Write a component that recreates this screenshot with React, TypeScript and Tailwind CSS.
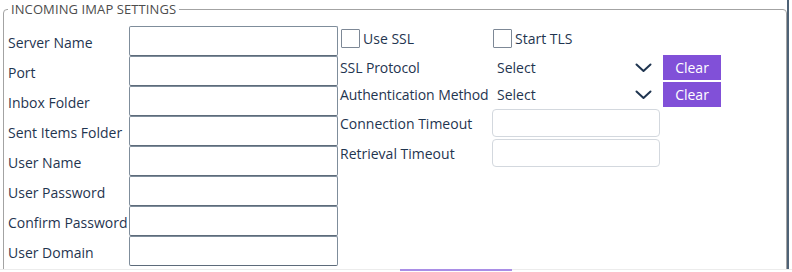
import { FC } from 'react'

const leftFields = [
  'Server Name',
  'Port',
  'Inbox Folder',
  'Sent Items Folder',
  'User Name',
  'User Password',
  'Confirm Password',
  'User Domain',
]

const Chevron: FC = () => (
  <svg width="17" height="10" viewBox="0 0 17 10" fill="none">
    <path d="M1.5 1.5 L8.5 8 L15.5 1.5" stroke="#1f3550" strokeWidth="2" strokeLinecap="round" strokeLinejoin="round" />
  </svg>
)

const Checkbox: FC<{ label: string }> = ({ label }) => (
  <label className="flex items-center gap-[3px]">
    <span className="w-[19px] h-[19px] border border-[#7d8896] rounded-[1px] bg-white" />
    <span>{label}</span>
  </label>
)

const SelectRow: FC<{ label: string }> = ({ label }) => (
  <div className="flex items-center h-[27px]">
    <span className="w-[152px] shrink-0 whitespace-nowrap tracking-[-0.1px]">{label}</span>
    <div className="flex items-center w-[167px] pl-[5px] pr-[7px] justify-between">
      <span>Select</span>
      <Chevron />
    </div>
    <button className="ml-[4px] w-[58px] h-[25px] bg-[#8150d8] text-white text-[14px] leading-none">
      Clear
    </button>
  </div>
)

const TimeoutRow: FC<{ label: string }> = ({ label }) => (
  <div className="flex items-center h-[30px]">
    <span className="w-[152px] shrink-0 whitespace-nowrap">{label}</span>
    <input className="w-[168px] h-[28px] border border-[#d3d8de] rounded-[4px] bg-white" />
  </div>
)

const App: FC = () => {
  return (
    <div
      className="w-[792px] h-[272px] bg-white overflow-hidden text-[14px] text-[#1f3550]"
      style={{ fontFamily: '"Open Sans", "Liberation Sans", sans-serif' }}
    >
      <div className="flex h-[269px]">
        <div className="w-[787px] pl-[3px] overflow-hidden">
          <fieldset className="w-[784px] h-[300px] border border-[#a3a3a3] rounded-[4px] pl-[4px]">
            <legend className="ml-0 px-[3px] text-[13px] leading-[18px] text-[#4d4d4d] tracking-[0.1px]">
              INCOMING IMAP SETTINGS
            </legend>

            <div className="flex pt-[8px]">
              <div className="flex flex-col">
                {leftFields.map((field) => (
                  <div className="flex items-center h-[30px]" key={field}>
                    <span className="w-[121px] shrink-0 whitespace-nowrap pt-[2px]">{field}</span>
                    <input className="w-[209px] h-[30px] border border-[#7f8d9b] border-b-[#5d6b7a] rounded-[2px] bg-white" />
                  </div>
                ))}
              </div>

              <div className="flex flex-col ml-[2px]">
                <div className="flex items-center h-[28px] pb-[4px]">
                  <div className="w-[152px] pl-px">
                    <Checkbox label="Use SSL" />
                  </div>
                  <div className="pl-px">
                    <Checkbox label="Start TLS" />
                  </div>
                </div>
                <SelectRow label="SSL Protocol" />
                <SelectRow label="Authentication Method" />
                <TimeoutRow label="Connection Timeout" />
                <TimeoutRow label="Retrieval Timeout" />
              </div>
            </div>
          </fieldset>
        </div>
        <div className="w-[2px] bg-[#4e6276]" />
      </div>
      <div className="relative h-[3px] border-t border-[#ececec]">
        <div className="absolute left-[400px] -top-[1px] w-[112px] h-[2px] bg-[#a98ee6]" />
      </div>
    </div>
  )
}

export default App
